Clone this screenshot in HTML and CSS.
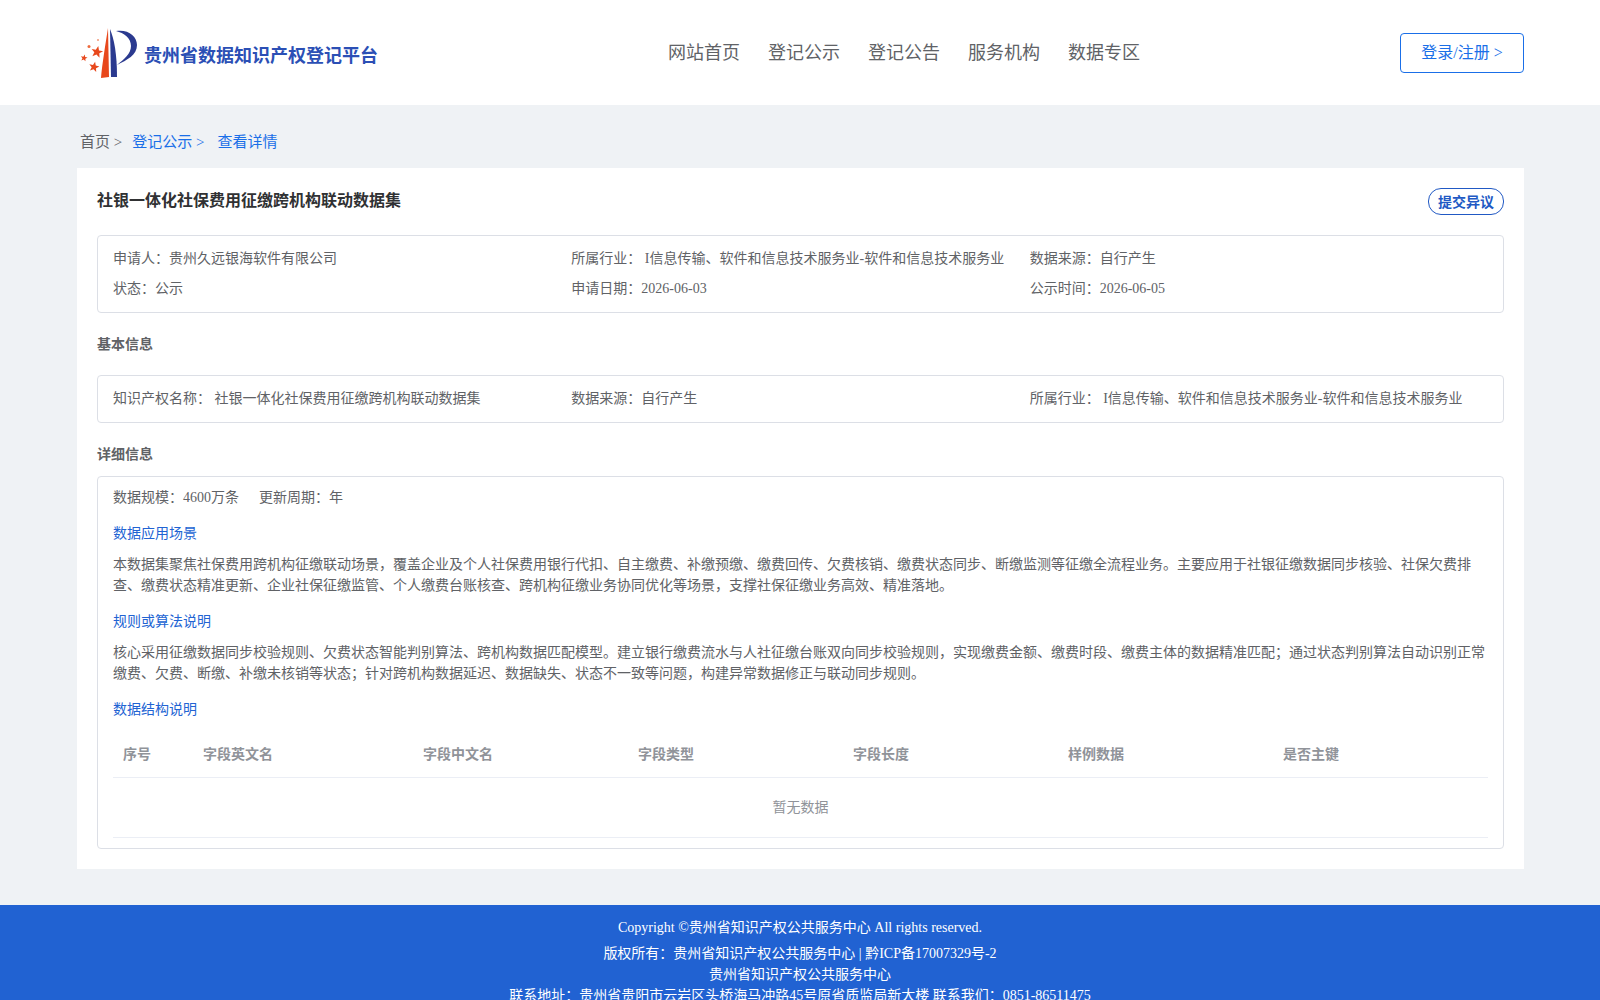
FILE: index.html
```html
<!DOCTYPE html>
<html lang="zh-CN">
<head>
  <meta charset="UTF-8" />
  <title>贵州省数据知识产权登记平台</title>
  <link rel="stylesheet" href="styles.css">
</head>
<body>

  <header class="header">
    <div class="brand">
      <svg class="logo" viewBox="0 0 60 52" width="60" height="52">
        <defs>
          <polygon id="star" points="0,-10 2.6,-3.2 9.5,-3.1 4.1,1.3 5.9,8.1 0,4.200 -5.900,8.100 -4.100,1.300 -9.500,-3.100 -2.600,-3.200"/>
        </defs>
        <path d="M28 1 L29 50 L21 51 C22 38 26 14 28 1 Z" fill="#e8481c"/>
        <path d="M30 2 C34 12 37 26 37 50 L31 50 Z" fill="#2b3a8f"/>
        <path d="M36 4 C48 2 57 9 57 18 C57 28 47 33 37 38 C44 32 51 27 51 19 C51 11 44 6 36 4 Z" fill="#2b3a8f"/>
        <g fill="#e8481c">
          <use href="#star" transform="translate(17 25) rotate(12) scale(0.62)"/>
          <use href="#star" transform="translate(14 40) rotate(12) scale(0.54)"/>
          <use href="#star" transform="translate(4 31) rotate(12) scale(0.36)"/>
        </g>
        <circle cx="9" cy="19.500" r="1.500" fill="#ee6a3c"/>
        <circle cx="18" cy="13" r="1" fill="#f0987a"/>
      </svg>
      <span class="brand-name">贵州省数据知识产权登记平台</span>
    </div>
    <nav class="nav">
      <a href="#">网站首页</a>
      <a href="#">登记公示</a>
      <a href="#">登记公告</a>
      <a href="#">服务机构</a>
      <a href="#">数据专区</a>
    </nav>
    <a class="login" href="#">登录/注册 &gt;</a>
  </header>

  <div class="crumbs">
    <span>首页 &gt;</span>
    <a href="#">登记公示 &gt;</a>
    <a class="crumb-last" href="#">查看详情</a>
  </div>

  <main class="card">
    <div class="title-row">
      <h1>社银一体化社保费用征缴跨机构联动数据集</h1>
      <button class="objection">提交异议</button>
    </div>

    <div class="box info-grid">
      <div>申请人：贵州久远银海软件有限公司</div>
      <div>所属行业： I信息传输、软件和信息技术服务业-软件和信息技术服务业</div>
      <div>数据来源：自行产生</div>
      <div>状态：公示</div>
      <div>申请日期：2026-06-03</div>
      <div>公示时间：2026-06-05</div>
    </div>

    <h2>基本信息</h2>
    <div class="box info-grid">
      <div>知识产权名称： 社银一体化社保费用征缴跨机构联动数据集</div>
      <div>数据来源：自行产生</div>
      <div>所属行业： I信息传输、软件和信息技术服务业-软件和信息技术服务业</div>
    </div>

    <h2 class="tight">详细信息</h2>
    <div class="box detail">
      <div class="meta">
        <span>数据规模：4600万条</span>
        <span>更新周期：年</span>
      </div>

      <h3>数据应用场景</h3>
      <p>本数据集聚焦社保费用跨机构征缴联动场景，覆盖企业及个人社保费用银行代扣、自主缴费、补缴预缴、缴费回传、欠费核销、缴费状态同步、断缴监测等征缴全流程业务。主要应用于社银征缴数据同步核验、社保欠费排查、缴费状态精准更新、企业社保征缴监管、个人缴费台账核查、跨机构征缴业务协同优化等场景，支撑社保征缴业务高效、精准落地。</p>

      <h3>规则或算法说明</h3>
      <p>核心采用征缴数据同步校验规则、欠费状态智能判别算法、跨机构数据匹配模型。建立银行缴费流水与人社征缴台账双向同步校验规则，实现缴费金额、缴费时段、缴费主体的数据精准匹配；通过状态判别算法自动识别正常缴费、欠费、断缴、补缴未核销等状态；针对跨机构数据延迟、数据缺失、状态不一致等问题，构建异常数据修正与联动同步规则。</p>

      <h3>数据结构说明</h3>
      <table class="fields">
        <thead>
          <tr>
            <th class="col-no">序号</th>
            <th class="col-en">字段英文名</th>
            <th>字段中文名</th>
            <th>字段类型</th>
            <th>字段长度</th>
            <th>样例数据</th>
            <th>是否主键</th>
          </tr>
        </thead>
        <tbody>
          <tr><td class="empty" colspan="7">暂无数据</td></tr>
        </tbody>
      </table>
    </div>
  </main>

  <footer class="footer">
    <div class="copyright">Copyright ©贵州省知识产权公共服务中心 All rights reserved.</div>
    <div>版权所有：贵州省知识产权公共服务中心 | 黔ICP备17007329号-2</div>
    <div>贵州省知识产权公共服务中心</div>
    <div>联系地址：贵州省贵阳市云岩区头桥海马冲路45号原省质监局新大楼 联系我们：0851-86511475</div>
  </footer>

</body>
</html>
```
FILE: styles.css
```css
body {
  font-family: "Liberation Serif", "Noto Sans CJK SC", sans-serif;
  margin: 0;
  background: #eff2f5;
  color: #606266;
  font-size: 14px;
}
a {
  text-decoration: none;
  color: inherit;
}
.header {
  height: 105px;
  background: #fff;
  display: flex;
  align-items: center;
  justify-content: space-between;
  padding: 0 76px 0 80px;
}
.brand {
  width: 588px;
  display: flex;
  align-items: center;
  gap: 4px;
}
.logo {
  flex: none;
}
.brand-name {
  font-size: 18px;
  font-weight: bold;
  color: #2b4fb5;
  margin-top: 2px;
}
.nav {
  flex: 1;
  display: flex;
  gap: 28px;
  font-size: 18px;
  color: #606266;
  margin-top: -4px;
}
.login {
  width: 122px;
  height: 38px;
  line-height: 38px;
  text-align: center;
  border: 1px solid #1a6fe8;
  border-radius: 4px;
  font-size: 16px;
  color: #1a6fe8;
}
.crumbs {
  padding: 8px 80px 0;
  height: 55px;
  display: flex;
  align-items: center;
  gap: 10px;
  font-size: 15px;
}
.crumbs a {
  color: #1a6fe8;
}
.crumbs .crumb-last {
  margin-left: 3px;
}
.card {
  margin: 0 76px 36px 77px;
  background: #fff;
  padding: 20px;
  height: 661px;
}
.title-row {
  display: flex;
  justify-content: space-between;
  align-items: flex-start;
  height: 47px;
}
h1 {
  margin: 0;
  font-size: 16px;
  line-height: 26px;
  color: #303133;
}
.objection {
  width: 76px;
  height: 27px;
  padding: 0 0 2px;
  font-family: inherit;
  font-size: 14px;
  font-weight: bold;
  color: #2159c4;
  background: #fff;
  border: 1px solid #2159c4;
  border-radius: 13px;
}
.box {
  border: 1px solid #dcdfe6;
  border-radius: 4px;
  padding: 0 15px;
}
.info-grid {
  display: grid;
  grid-template-columns: repeat(3, 1fr);
  padding-top: 8px;
  padding-bottom: 8px;
  line-height: 30px;
}
h2 {
  margin: 0;
  font-size: 14px;
  color: #606266;
  line-height: 20px;
  padding: 22px 0 20px;
}
h2.tight {
  padding-bottom: 11px;
}
.detail {
  padding-bottom: 10px;
}
.meta {
  display: flex;
  gap: 20px;
  line-height: 20px;
  padding-top: 11px;
}
h3 {
  margin: 16px 0 10px;
  font-size: 14px;
  font-weight: normal;
  line-height: 20px;
  color: #2163d3;
}
.detail p {
  margin: 0;
  line-height: 21px;
}
.fields {
  width: 100%;
  border-collapse: collapse;
  table-layout: fixed;
  margin-top: -1px;
}
.fields th {
  height: 48px;
  padding: 0 10px;
  text-align: left;
  font-size: 14px;
  color: #909399;
  border-bottom: 1px solid #ebeef5;
}
.fields .col-no {
  width: 60px;
}
.fields .col-en {
  width: 200px;
}
.empty {
  height: 55px;
  padding: 0 0 4px;
  text-align: center;
  color: #909399;
  border-bottom: 1px solid #ebeef5;
}
.footer {
  background: #2162d2;
  color: #fff;
  text-align: center;
  line-height: 21px;
  padding: 12px 0 10px;
}
.footer .copyright {
  margin-bottom: 5px;
}
```
